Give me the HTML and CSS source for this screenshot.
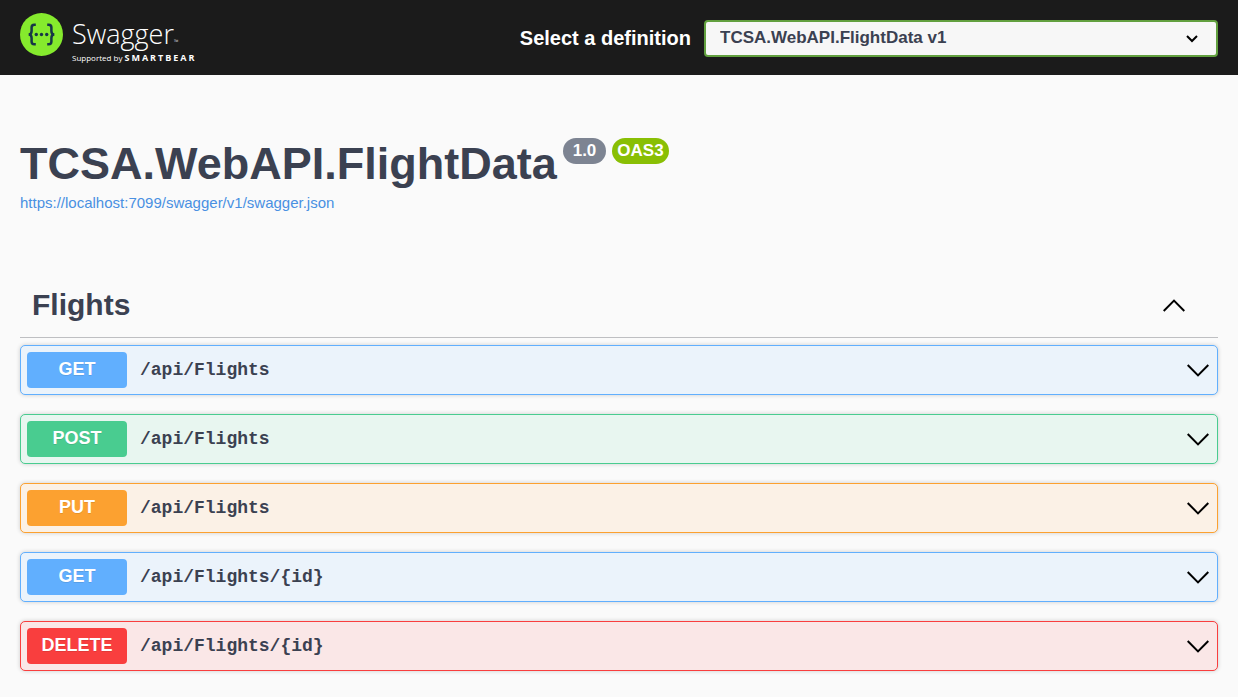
FILE: index.html
```html
<!DOCTYPE html>
<html lang="en">
<head>
<meta charset="utf-8">
<meta name="viewport" content="width=device-width, initial-scale=1">
<title>Swagger UI</title>
<link rel="stylesheet" href="styles.css">
</head>
<body>
<header class="topbar">
  <a class="logo" href="#">
    <svg class="logo-mark" viewBox="0 0 43 43" aria-hidden="true">
      <circle cx="21.5" cy="21.5" r="21.5" fill="#85ea2d"/>
      <g fill="none" stroke="#173647" stroke-width="2.500">
        <path d="M15.800 11.800h-1.600c-1.800 0-2.600 1-2.600 2.800v3.400c0 2.300-.8 3.400-2.900 3.500 2.100.1 2.900 1.200 2.900 3.500v3.400c0 1.800.8 2.800 2.600 2.800h1.600"/>
        <path d="M27.200 11.800h1.600c1.800 0 2.600 1 2.600 2.800v3.400c0 2.300.8 3.400 2.900 3.500-2.100.1-2.900 1.200-2.900 3.500v3.400c0 1.800-.8 2.800-2.600 2.800h-1.600"/>
      </g>
      <g fill="#173647"><circle cx="16.300" cy="21.500" r="1.700"/><circle cx="21.500" cy="21.500" r="1.700"/><circle cx="26.700" cy="21.500" r="1.700"/></g>
    </svg>
    <span class="logo-text">
      <span class="logo-name">Swagger<span class="logo-tm">™</span></span>
      <span class="logo-by">Supported by <b class="logo-brand">SMARTBEAR</b></span>
    </span>
  </a>
  <form class="definition">
    <label class="definition-label" for="spec">Select a definition</label>
    <span class="select-wrap">
      <select class="definition-select" id="spec"><option>TCSA.WebAPI.FlightData v1</option></select>
      <svg class="select-arrow" viewBox="0 0 12 8" aria-hidden="true"><path d="M1 1l5 5 5-5"/></svg>
    </span>
  </form>
</header>
<main class="content">
  <section class="info">
    <h1 class="title">TCSA.WebAPI.FlightData<span class="badges"><span class="badge">1.0</span><span class="badge badge-oas">OAS3</span></span></h1>
    <a class="spec-link" href="#">https://localhost:7099/swagger/v1/swagger.json</a>
  </section>
  <section class="tag">
    <div class="tag-head">
      <h2 class="tag-name">Flights</h2>
      <button class="toggle" type="button" aria-label="Collapse Flights"><svg class="chevron" viewBox="0 0 22 13" aria-hidden="true"><path d="M.7 12L11 1.600 21.300 12"/></svg></button>
    </div>
    <div class="operations">
      <div class="op get"><button class="method" type="button">GET</button><span class="path">/api/Flights</span><button class="toggle" type="button" aria-label="Expand"><svg class="chevron" viewBox="0 0 22 13" aria-hidden="true"><path d="M.7 1L11 11.400 21.300 1"/></svg></button></div>
      <div class="op post"><button class="method" type="button">POST</button><span class="path">/api/Flights</span><button class="toggle" type="button" aria-label="Expand"><svg class="chevron" viewBox="0 0 22 13" aria-hidden="true"><path d="M.7 1L11 11.400 21.300 1"/></svg></button></div>
      <div class="op put"><button class="method" type="button">PUT</button><span class="path">/api/Flights</span><button class="toggle" type="button" aria-label="Expand"><svg class="chevron" viewBox="0 0 22 13" aria-hidden="true"><path d="M.7 1L11 11.400 21.300 1"/></svg></button></div>
      <div class="op get"><button class="method" type="button">GET</button><span class="path">/api/Flights/{id}</span><button class="toggle" type="button" aria-label="Expand"><svg class="chevron" viewBox="0 0 22 13" aria-hidden="true"><path d="M.7 1L11 11.400 21.300 1"/></svg></button></div>
      <div class="op delete"><button class="method" type="button">DELETE</button><span class="path">/api/Flights/{id}</span><button class="toggle" type="button" aria-label="Expand"><svg class="chevron" viewBox="0 0 22 13" aria-hidden="true"><path d="M.7 1L11 11.400 21.300 1"/></svg></button></div>
    </div>
  </section>
</main>
</body>
</html>
```
FILE: styles.css
```css
* { box-sizing: border-box; }
body {
  margin: 0;
  background: #fafafa;
  color: #3b4151;
  font-family: "Liberation Sans", Arial, sans-serif;
}
button { border: 0; padding: 0; font-family: inherit; cursor: pointer; }

.topbar {
  display: flex;
  align-items: center;
  justify-content: space-between;
  padding: 12px 20px 11px;
  background: #1b1b1b;
}
.logo {
  display: flex;
  align-items: flex-start;
  gap: 9px;
  color: #fff;
  text-decoration: none;
  font-family: "Open Sans", sans-serif;
}
.logo-mark { width: 43px; height: 43px; margin-top: 1px; }
.logo-text { display: flex; flex-direction: column; padding-top: 5px; }
.logo-name { font-size: 27px; font-weight: 300; line-height: 34px; }
.logo-tm { font-size: 6px; line-height: 1; }
.logo-by { font-size: 8px; line-height: 13px; white-space: nowrap; }
.logo-brand { font-size: 9px; font-weight: 700; line-height: 1; letter-spacing: 2px; }

.definition { display: flex; align-items: center; gap: 13px; }
.definition-label { color: #fff; font-size: 20px; font-weight: 700; }
.select-wrap { position: relative; width: 514px; }
.definition-select {
  display: block;
  width: 100%;
  height: 37px;
  padding: 0 40px 2px 14px;
  appearance: none;
  border: 2px solid #62a03f;
  border-radius: 4px;
  background: #f7f7f7;
  color: #3b4151;
  font-family: inherit;
  font-size: 17px;
  font-weight: 700;
}
.select-arrow {
  position: absolute;
  right: 20px;
  top: 15px;
  width: 12px;
  height: 8px;
  fill: none;
  stroke: #000;
  stroke-width: 2;
  pointer-events: none;
}

.content { padding: 62px 20px 25px; }
.title {
  display: flex;
  align-items: flex-start;
  gap: 6px;
  margin: 0;
  font-size: 45px;
  line-height: 54px;
}
.badges { display: flex; gap: 6px; padding-top: 1px; }
.badge {
  padding: 0 10px;
  border-radius: 13px;
  background: #7d8492;
  color: #fff;
  font-size: 17px;
  line-height: 26px;
}
.badge-oas { padding: 0 5px; background: #89bf04; }
.spec-link {
  display: inline-block;
  color: #4990e2;
  font-size: 15px;
  line-height: 24px;
  text-decoration: none;
}

.tag { margin-top: 60px; }
.tag-head {
  display: flex;
  align-items: center;
  justify-content: space-between;
  padding: 12px 33px 14px 12px;
  border-bottom: 1px solid #bebfc2;
}
.tag-name { margin: 0; font-size: 30px; line-height: 36px; }
.toggle { display: flex; background: none; }
.chevron {
  width: 22px;
  height: 13px;
  fill: none;
  stroke: #000;
  stroke-width: 2;
}

.operations { display: grid; gap: 19px; padding-top: 7px; }
.op {
  display: flex;
  align-items: center;
  padding: 6px 8px 6px 6px;
  border: 1px solid;
  border-radius: 5px;
  box-shadow: 0 0 4px rgba(0, 0, 0, .19);
}
.method {
  width: 100px;
  height: 36px;
  padding-bottom: 2px;
  border-radius: 4px;
  color: #fff;
  font-size: 18px;
  font-weight: 700;
  text-shadow: 0 1px 0 rgba(0, 0, 0, .1);
}
.path {
  flex: 1;
  padding: 0 13px;
  font-family: "Liberation Mono", monospace;
  font-size: 18px;
  font-weight: 700;
}
.get { border-color: #61affe; background: #ebf3fb; }
.get .method { background: #61affe; }
.post { border-color: #49cc90; background: #e8f6f0; }
.post .method { background: #49cc90; }
.put { border-color: #fca130; background: #fbf1e6; }
.put .method { background: #fca130; }
.delete { border-color: #f93e3e; background: #fae7e7; }
.delete .method { background: #f93e3e; }
```
